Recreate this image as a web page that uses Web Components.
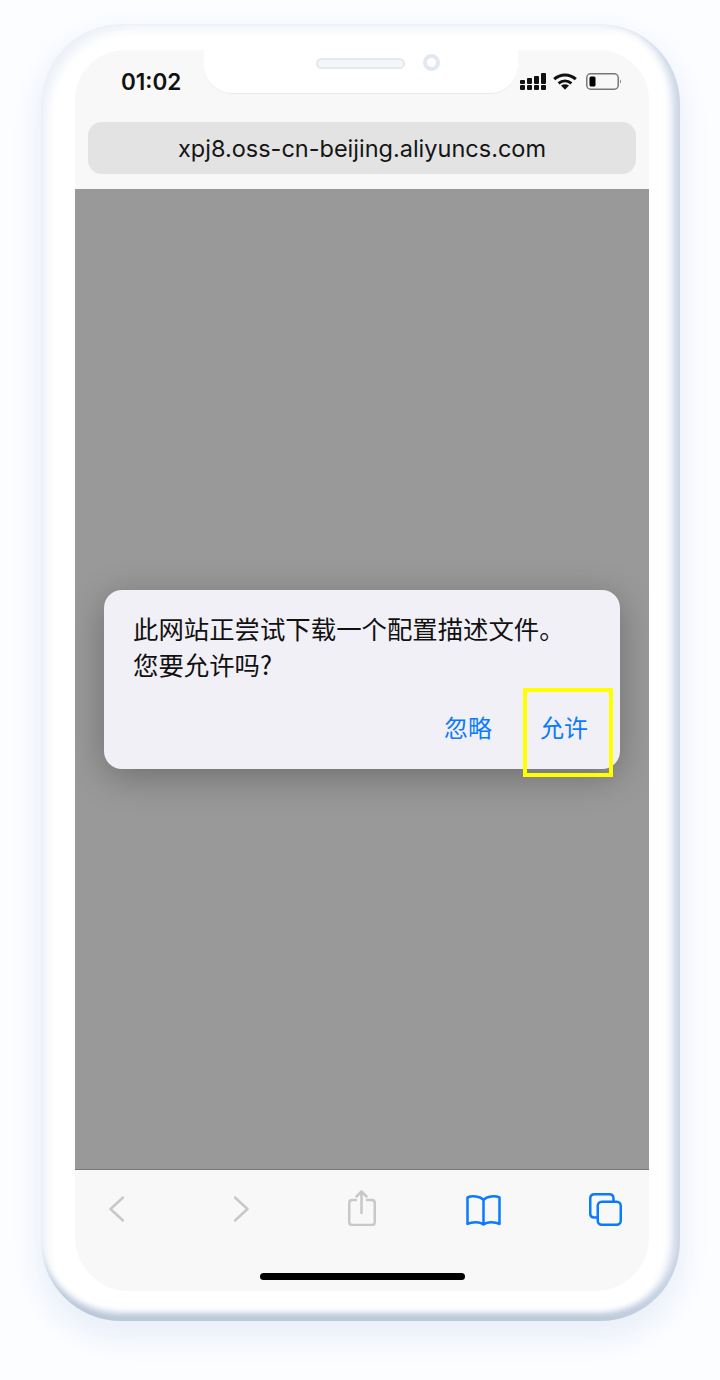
<!DOCTYPE html>
<html lang="zh">
<head>
<meta charset="utf-8">
<title>Profile download</title>
<style>
  html, body { margin: 0; height: 1380px; background: #fcfdff; overflow: hidden; }
  body { font-family: "Inter", "Noto Sans CJK SC", sans-serif; }
</style>
</head>
<body>
<phone-frame>
  <status-bar time="01:02"></status-bar>
  <address-bar>xpj8.oss-cn-beijing.aliyuncs.com</address-bar>
  <page-dim>
    <alert-dialog>
      此网站正尝试下载一个配置描述文件。<br>您要允许吗?
      <alert-button slot="actions">忽略</alert-button>
      <alert-button slot="actions" marked>允许</alert-button>
    </alert-dialog>
  </page-dim>
  <browser-toolbar></browser-toolbar>
</phone-frame>

<script>
class PhoneFrame extends HTMLElement {
    constructor() {
        super();
        this.attachShadow({ mode: 'open' });
        this.shadowRoot.innerHTML = `
            <style>
                :host {
                    display: block;
                    box-sizing: border-box;
                    width: 639px;
                    height: 1297px;
                    margin: 24px 0 0 41px;
                    padding: 26px 31px 30px 34px;
                    background: #fff;
                    border-radius: 80px;
                    box-shadow:
                        inset -12px -2px 10px -5px #c8d3e4,
                        inset 0 -13px 6px -5px #bac7da,
                        inset 12px 10px 10px -5px #eef2f8,
                        0 14px 30px 4px #e9eff9;
                }
                .screen {
                    position: relative;
                    display: flex;
                    flex-direction: column;
                    height: 100%;
                    background: #f8f8f8;
                    border-radius: 50px 50px 54px 54px;
                    overflow: hidden;
                }
                .notch {
                    position: absolute;
                    top: 0;
                    left: 129px;
                    width: 314px;
                    height: 44px;
                    box-sizing: border-box;
                    display: flex;
                    justify-content: center;
                    gap: 18px;
                    padding: 4px 0 0 34px;
                    background: #fff;
                    border-bottom: 1px solid #e2e9f2;
                    border-radius: 0 0 28px 28px;
                }
                .speaker {
                    width: 89px;
                    height: 11px;
                    margin-top: 4px;
                    box-sizing: border-box;
                    background: #f3f6fa;
                    border: 2px solid #e3e9f1;
                    border-radius: 6px;
                }
                .camera {
                    width: 17px;
                    height: 17px;
                    box-sizing: border-box;
                    border: 4px solid #e2e8f0;
                    border-radius: 50%;
                }
            </style>
            <div class="screen">
                <div class="notch"><div class="speaker"></div><div class="camera"></div></div>
                <slot></slot>
            </div>
        `;
    }
}

class StatusBar extends HTMLElement {
    constructor() {
        super();
        this.attachShadow({ mode: 'open' });
        this.shadowRoot.innerHTML = `
            <style>
                :host {
                    display: flex;
                    align-items: flex-start;
                    justify-content: space-between;
                    flex: none;
                    height: 72px;
                    box-sizing: border-box;
                    padding: 19px 27px 0 46px;
                    font: 600 22.5px/26px "Inter", "Liberation Sans", sans-serif;
                    color: #111;
                }
                .icons { display: flex; gap: 8px; margin-top: 4px; position: relative; }
                svg { display: block; }
            </style>
            <span class="time"></span>
            <div class="icons">
                <svg style="margin-right:-2px" width="27" height="17" viewBox="0 0 27 17" fill="#111">
                    <rect x="0" y="7" width="5" height="4" rx="1"/><rect x="0" y="12" width="5" height="5" rx="1"/>
                    <rect x="7" y="5" width="5" height="6" rx="1"/><rect x="7" y="12" width="5" height="5" rx="1"/>
                    <rect x="14" y="3" width="5" height="8" rx="1"/><rect x="14" y="12" width="5" height="5" rx="1"/>
                    <rect x="21" y="0" width="5" height="11" rx="1"/><rect x="21" y="12" width="5" height="5" rx="1"/>
                </svg>
                <svg width="24" height="17" viewBox="0 0 24 17" fill="none" stroke="#111" stroke-width="3">
                    <path d="M1.2 6.2C7.5 .6 16.500 .6 22.800 6.200"/>
                    <path d="M5.600 10.400C9.400 7.200 14.600 7.200 18.400 10.400"/>
                    <path d="M8 12.500L12 16.800L16 12.500C13.500 10.900 10.500 10.900 8 12.500Z" fill="#111" stroke="none"/>
                </svg>
                <svg width="36" height="17" viewBox="0 0 36 17" style="margin-left:1px">
                    <rect x=".75" y=".75" width="31.500" height="15.500" rx="4" fill="none" stroke="#777" stroke-width="1.500"/>
                    <rect x="3.500" y="3.500" width="6" height="10" rx="1.500" fill="#000"/>
                    <path d="M34 6.500C35.200 7 35.200 10 34 10.500Z" fill="#777"/>
                </svg>
            </div>
        `;
        this.shadowRoot.querySelector('.time').textContent = this.getAttribute('time');
    }
}

class AddressBar extends HTMLElement {
    constructor() {
        super();
        this.attachShadow({ mode: 'open' });
        this.shadowRoot.innerHTML = `
            <style>
                :host {
                    display: block;
                    flex: none;
                    padding: 0 13px 15px;
                }
                .field {
                    height: 52px;
                    display: flex;
                    align-items: center;
                    justify-content: center;
                    background: #e3e3e3;
                    border-radius: 14px;
                    font: 400 23.5px "Inter", "Liberation Sans", sans-serif;
                    color: #151515;
                }
            </style>
            <div class="field"><slot></slot></div>
        `;
    }
}

class PageDim extends HTMLElement {
    constructor() {
        super();
        this.attachShadow({ mode: 'open' });
        this.shadowRoot.innerHTML = `
            <style>
                :host {
                    display: flex;
                    flex: 1;
                    align-items: center;
                    justify-content: center;
                    background: #999;
                }
            </style>
            <slot></slot>
        `;
    }
}

class AlertDialog extends HTMLElement {
    constructor() {
        super();
        this.attachShadow({ mode: 'open' });
        this.shadowRoot.innerHTML = `
            <style>
                :host {
                    display: block;
                    box-sizing: border-box;
                    width: 516px;
                    height: 179px;
                    padding: 20px 20px 0 29px;
                    background: #f1f0f6;
                    border-radius: 18px;
                    box-shadow: 0 8px 36px rgba(0, 0, 0, .28);
                    font: 400 25.4px/36px "Noto Sans CJK SC", "Inter", sans-serif;
                    color: #111;
                }
                .actions {
                    display: flex;
                    justify-content: flex-end;
                    gap: 48px;
                    margin: 27px 12px 0 0;
                }
            </style>
            <slot></slot>
            <div class="actions"><slot name="actions"></slot></div>
        `;
    }
}

class AlertButton extends HTMLElement {
    constructor() {
        super();
        this.attachShadow({ mode: 'open' });
        this.shadowRoot.innerHTML = `
            <style>
                :host {
                    display: block;
                    position: relative;
                    font: 400 24px/36px "Noto Sans CJK SC", sans-serif;
                    color: #0a7aff;
                }
                /* yellow tutorial highlight, lies over the dialog edge */
                :host([marked])::after {
                    content: "";
                    position: absolute;
                    left: -17px;
                    top: -21px;
                    width: 82px;
                    height: 81px;
                    border: 4px solid #ffff00;
                }
            </style>
            <slot></slot>
        `;
    }
}

class BrowserToolbar extends HTMLElement {
    constructor() {
        super();
        this.attachShadow({ mode: 'open' });
        this.shadowRoot.innerHTML = `
            <style>
                :host {
                    display: block;
                    position: relative;
                    flex: none;
                    height: 122px;
                    box-sizing: border-box;
                    border-top: 1px solid #777;
                }
                .icons {
                    display: flex;
                    align-items: flex-start;
                    padding-left: 34px;
                    height: 100px;
                }
                svg { display: block; flex: none; fill: none; stroke-width: 2.5; stroke-linecap: round; stroke-linejoin: round; }
                .off { stroke: #c8c8c8; }
                .on { stroke: #0a7aff; }
                .home {
                    width: 205px;
                    height: 7px;
                    margin: 3px 0 0 185px;
                    background: #000;
                    border-radius: 4px;
                }
            </style>
            <div class="icons">
                <svg class="off" style="margin-top:26px" width="15" height="26" viewBox="0 0 15 26"><path d="M14 1.500L1.500 13L14 24.500"/></svg>
                <svg class="off" style="margin:26px 0 0 110px" width="15" height="26" viewBox="0 0 15 26"><path d="M1 1.500L13.500 13L1 24.500"/></svg>
                <svg class="off" style="margin:20px 0 0 99px" width="28" height="36" viewBox="0 0 28 36"><path d="M8 10H4C2 10 1.250 11 1.250 13V32C1.250 34 2 35 4 35H24C26 35 26.750 34 26.750 32V13C26.750 11 26 10 24 10H19M13.500 23V1.500M8.500 6.500L13.500 1.500L18.500 6.500"/></svg>
                <svg class="on" style="margin:25px 0 0 90px" width="35" height="31" viewBox="0 0 35 31"><path d="M17.500 5C14 1 6 .5 1.500 2.500V29C6 26.500 14 26.500 17.500 29.500C21 26.500 29 26.500 33.500 29V2.500C29 .5 21 1 17.500 5ZM17.500 5V29.500"/></svg>
                <svg class="on" style="margin:23px 0 0 88px" width="33" height="33" viewBox="0 0 33 33"><path d="M7.500 24.500H5.500C2.800 24.500 1.250 23 1.250 20.500V5.500C1.250 2.800 2.800 1.250 5.500 1.250H20.500C23 1.250 24.500 2.800 24.500 5.500V8"/><rect x="8.750" y="8.750" width="23" height="23" rx="4"/></svg>
            </div>
            <div class="home"></div>
        `;
    }
}

customElements.define('phone-frame', PhoneFrame);
customElements.define('status-bar', StatusBar);
customElements.define('address-bar', AddressBar);
customElements.define('page-dim', PageDim);
customElements.define('alert-dialog', AlertDialog);
customElements.define('alert-button', AlertButton);
customElements.define('browser-toolbar', BrowserToolbar);
</script>
</body>
</html>
